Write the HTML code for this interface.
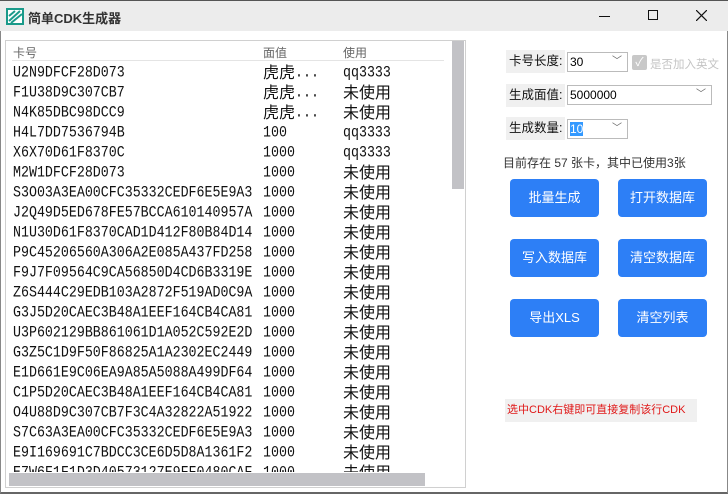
<!DOCTYPE html>
<html><head><meta charset="utf-8"><style>
*{margin:0;padding:0;box-sizing:border-box}
body{width:728px;height:494px;overflow:hidden;background:#fff;font-family:"Liberation Sans","Noto Sans CJK SC",sans-serif;position:relative}
.tb{position:absolute;left:0;top:0;width:728px;height:31px;background:#ececec;border-top:1px solid #555}
.tb .t{position:absolute;left:28px;top:7px;font-size:13px;font-weight:bold;color:#333}
.ab{position:absolute;white-space:nowrap}
.win{position:absolute;left:0;top:31px;width:728px;height:463px;border-left:1px solid #888;border-right:1px solid #888;border-bottom:2px solid #666}
.list{position:absolute;left:5px;top:40px;width:461px;height:448px;border:1px solid #d0d0d0;overflow:hidden}
.hd{position:absolute;top:3px;font-size:12px;color:#666}
.hl{position:absolute;left:6px;top:19px;width:432px;height:1px;background:#e4e4e4}
.row{position:absolute;left:0;height:20px;font-size:16px;line-height:20px;color:#111;white-space:nowrap}
.row span{position:absolute;top:0;height:20px}
.c1,.m{font-family:"Liberation Mono",monospace;font-size:13.3px;line-height:20px;display:inline-block;vertical-align:top;transform:scaleY(1.2);transform-origin:left center;font-weight:normal}
.m{position:relative;top:2px}
.c1{left:7px}
.row span.c2,.row span.c3{top:-2px;font-family:"Noto Sans CJK SC",sans-serif}
.c2{left:257px}
.c3{left:337px}
.vs{position:absolute;left:446px;top:0;width:12px;height:148px;background:#c2c2c6}
.hs{position:absolute;left:3px;top:432px;width:416px;height:13px;background:#c2c2c6}
.hsb{position:absolute;left:0;top:431px;width:461px;height:17px;background:#fff}
.lab{position:absolute;background:#f0f0f0;font-size:12.5px;color:#111;padding-left:3px;line-height:23px;white-space:nowrap;overflow:hidden}
.sel{position:absolute;border:1px solid #bbb;background:#fff;font-size:12px;line-height:18px;padding-left:2px;color:#000}
.sel i{position:absolute;right:5px;top:0;font-style:normal;color:#666;font-size:10px}
.btn{position:absolute;width:89px;height:38px;background:#2d7ff6;border-radius:4px;color:#fff;font-size:13px;text-align:center;line-height:38px}
</style></head><body>
<div class="tb">
<svg class="ab" style="left:6px;top:7px" width="18" height="17" viewBox="0 0 18 17"><rect x="1" y="1" width="16" height="15" fill="#fff" stroke="#1a9a8a" stroke-width="2"/><path d="M3 13L14 3M5 15L16 6M3 8L9 3" stroke="#1a9a8a" stroke-width="2"/></svg>
<div class="t">简单CDK生成器</div>
<div class="ab" style="left:599px;top:15px;width:11px;height:1px;background:#111"></div>
<div class="ab" style="left:648px;top:9px;width:10px;height:10px;border:1px solid #111"></div>
<svg class="ab" style="left:696px;top:9px" width="11" height="11"><path d="M0 0L11 11M11 0L0 11" stroke="#111" stroke-width="1.2"/></svg>
</div>
<div class="win"></div>
<div class="list">
<div class="hd" style="left:7px">卡号</div><div class="hd" style="left:257px">面值</div><div class="hd" style="left:337px">使用</div>
<div class="hl"></div>
<div class="row" style="top:22px"><span class="c1">U2N9DFCF28D073</span><span class="c2">虎虎<b class="m">...</b></span><span class="c3"><b class="m">qq3333</b></span></div>
<div class="row" style="top:42px"><span class="c1">F1U38D9C307CB7</span><span class="c2">虎虎<b class="m">...</b></span><span class="c3">未使用</span></div>
<div class="row" style="top:62px"><span class="c1">N4K85DBC98DCC9</span><span class="c2">虎虎<b class="m">...</b></span><span class="c3">未使用</span></div>
<div class="row" style="top:82px"><span class="c1">H4L7DD7536794B</span><span class="c2"><b class="m">100</b></span><span class="c3"><b class="m">qq3333</b></span></div>
<div class="row" style="top:102px"><span class="c1">X6X70D61F8370C</span><span class="c2"><b class="m">1000</b></span><span class="c3"><b class="m">qq3333</b></span></div>
<div class="row" style="top:122px"><span class="c1">M2W1DFCF28D073</span><span class="c2"><b class="m">1000</b></span><span class="c3">未使用</span></div>
<div class="row" style="top:142px"><span class="c1">S3O03A3EA00CFC35332CEDF6E5E9A3</span><span class="c2"><b class="m">1000</b></span><span class="c3">未使用</span></div>
<div class="row" style="top:162px"><span class="c1">J2Q49D5ED678FE57BCCA610140957A</span><span class="c2"><b class="m">1000</b></span><span class="c3">未使用</span></div>
<div class="row" style="top:182px"><span class="c1">N1U30D61F8370CAD1D412F80B84D14</span><span class="c2"><b class="m">1000</b></span><span class="c3">未使用</span></div>
<div class="row" style="top:202px"><span class="c1">P9C45206560A306A2E085A437FD258</span><span class="c2"><b class="m">1000</b></span><span class="c3">未使用</span></div>
<div class="row" style="top:222px"><span class="c1">F9J7F09564C9CA56850D4CD6B3319E</span><span class="c2"><b class="m">1000</b></span><span class="c3">未使用</span></div>
<div class="row" style="top:242px"><span class="c1">Z6S444C29EDB103A2872F519AD0C9A</span><span class="c2"><b class="m">1000</b></span><span class="c3">未使用</span></div>
<div class="row" style="top:262px"><span class="c1">G3J5D20CAEC3B48A1EEF164CB4CA81</span><span class="c2"><b class="m">1000</b></span><span class="c3">未使用</span></div>
<div class="row" style="top:282px"><span class="c1">U3P602129BB861061D1A052C592E2D</span><span class="c2"><b class="m">1000</b></span><span class="c3">未使用</span></div>
<div class="row" style="top:302px"><span class="c1">G3Z5C1D9F50F86825A1A2302EC2449</span><span class="c2"><b class="m">1000</b></span><span class="c3">未使用</span></div>
<div class="row" style="top:322px"><span class="c1">E1D661E9C06EA9A85A5088A499DF64</span><span class="c2"><b class="m">1000</b></span><span class="c3">未使用</span></div>
<div class="row" style="top:342px"><span class="c1">C1P5D20CAEC3B48A1EEF164CB4CA81</span><span class="c2"><b class="m">1000</b></span><span class="c3">未使用</span></div>
<div class="row" style="top:362px"><span class="c1">O4U88D9C307CB7F3C4A32822A51922</span><span class="c2"><b class="m">1000</b></span><span class="c3">未使用</span></div>
<div class="row" style="top:382px"><span class="c1">S7C63A3EA00CFC35332CEDF6E5E9A3</span><span class="c2"><b class="m">1000</b></span><span class="c3">未使用</span></div>
<div class="row" style="top:402px"><span class="c1">E9I169691C7BDCC3CE6D5D8A1361F2</span><span class="c2"><b class="m">1000</b></span><span class="c3">未使用</span></div>
<div class="row" style="top:422px"><span class="c1">E7W6F1F1D3D40573127E9FF0480CAF</span><span class="c2"><b class="m">1000</b></span><span class="c3">未使用</span></div>
<div class="hsb"></div>
<div class="hs"></div>
<div class="vs"></div>
</div>

<div class="lab" style="left:506px;top:50px;width:59px">卡号长度:</div>
<div class="sel" style="left:567px;top:52px;width:61px;height:20px">30<i>﹀</i></div>
<div class="ab" style="left:632px;top:55px;width:15px;height:15px;background:#c8c8c8;border-radius:2px;color:#fff;font-size:12px;line-height:15px;text-align:center">✓</div>
<div class="ab" style="left:650px;top:56px;font-size:11.5px;color:#c4c4c4">是否加入英文</div>
<div class="lab" style="left:506px;top:84px;width:59px">生成面值:</div>
<div class="sel" style="left:567px;top:85px;width:145px;height:20px">5000000<i>﹀</i></div>
<div class="lab" style="left:506px;top:117px;width:59px">生成数量:</div>
<div class="sel" style="left:567px;top:119px;width:61px;height:20px"><span style="background:#3399ff;color:#fff">10</span><i>﹀</i></div>
<div class="ab" style="left:503px;top:154px;font-size:12px;color:#333">目前存在 57 张卡，其中已使用3张</div>

<div class="btn" style="left:510px;top:179px">批量生成</div>
<div class="btn" style="left:618px;top:179px">打开数据库</div>
<div class="btn" style="left:510px;top:239px">写入数据库</div>
<div class="btn" style="left:618px;top:239px">清空数据库</div>
<div class="btn" style="left:510px;top:299px">导出XLS</div>
<div class="btn" style="left:618px;top:299px">清空列表</div>

<div class="ab" style="left:505px;top:399px;width:192px;height:23px;background:#f0f0f0;color:#e01818;font-size:11px;line-height:23px;padding-left:2px">选中CDK右键即可直接复制该行CDK</div>
</body></html>
